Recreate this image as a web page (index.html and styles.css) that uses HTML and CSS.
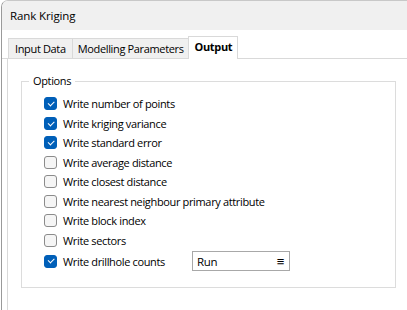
FILE: index.html
```html
<!DOCTYPE html>
<html lang="en">
<head>
  <meta charset="UTF-8">
  <title>Rank Kriging</title>
  <link rel="stylesheet" href="styles.css">
</head>
<body>
  <div class="window">
    <div class="titlebar">Rank Kriging</div>

    <div class="tabs">
      <div class="tab">Input Data</div>
      <div class="tab narrow">Modelling Parameters</div>
      <div class="tab active">Output</div>
    </div>

    <div class="panel">
      <fieldset class="group">
        <legend>Options</legend>

        <label class="row"><span class="box checked"></span>Write number of points</label>
        <label class="row"><span class="box checked"></span>Write kriging variance</label>
        <label class="row"><span class="box checked"></span>Write standard error</label>
        <label class="row"><span class="box"></span>Write average distance</label>
        <label class="row"><span class="box"></span>Write closest distance</label>
        <label class="row"><span class="box"></span>Write nearest neighbour primary attribute</label>
        <label class="row"><span class="box"></span>Write block index</label>
        <label class="row"><span class="box"></span>Write sectors</label>
        <div class="row last">
          <label class="check"><span class="box checked"></span>Write drillhole counts</label>
          <div class="combo">
            <span>Run</span>
            <span class="menu">&#8801;</span>
          </div>
        </div>
      </fieldset>
    </div>
  </div>
</body>
</html>
```

FILE: styles.css
```css
* { box-sizing: border-box; }

body {
  margin: 0;
  background: #fff;
  font-family: 'Open Sans', 'Noto Sans', sans-serif;
  font-size: 11px;
  letter-spacing: -0.35px;
  color: #000;
  width: 407px;
  height: 310px;
  overflow: hidden;
}

.window {
  margin-left: 1px;
  height: 310px;
  border-left: 1px solid #9a9a9a;
  border-top: 1px solid #c8c8c8;
  border-top-left-radius: 7px;
  background: #fff;
  overflow: hidden;
}

.titlebar {
  height: 29px;
  background: #f0f0f0;
  padding: 7px 0 0 8px;
  font-size: 11.5px;
  letter-spacing: -0.1px;
  line-height: 16px;
}

.tabs {
  display: flex;
  align-items: flex-end;
  height: 29px;
  padding-left: 6px;
  border-bottom: 1px solid #d9d9d9;
}

.tab {
  height: 20px;
  padding: 0 6px;
  line-height: 20px;
  background: #f0f0f0;
  border: 1px solid #d9d9d9;
  border-bottom: none;
  margin-right: -1px;
}

.tab.narrow {
  padding: 0 4px 0 5px;
}

.tab.active {
  height: 23px;
  padding: 0 5px 0 6px;
  background: #fff;
  font-weight: 700;
  line-height: 20px;
  margin-bottom: -1px;
}

.panel {
  margin-left: 5px;
  height: 260px;
  border-left: 1px solid #d9d9d9;
  padding: 15px 11px 0 13px;
}

.group {
  margin: 0;
  width: 375px;
  height: 214px;
  border: 1px solid #dcdcdc;
  padding: 6px 0 0 0;
}

.group legend {
  margin-left: 7px;
  padding: 0 4px;
  line-height: 14px;
}

.row {
  display: flex;
  align-items: center;
  height: 19.5px;
  padding-left: 22px;
  white-space: nowrap;
}

.check {
  display: flex;
  align-items: center;
  width: 148px;
}

.box {
  width: 13px;
  height: 13px;
  margin-right: 6px;
  border: 1px solid #8b8b8b;
  border-radius: 3px;
  background: #f5f5f5;
  flex: none;
  display: flex;
  align-items: center;
  justify-content: center;
}

.box.checked {
  border-color: #005fb8;
  background: #005fb8;
}

.box.checked::after {
  content: "";
  width: 5px;
  height: 2.5px;
  border-left: 1px solid #fff;
  border-bottom: 1px solid #fff;
  transform: translateY(-1px) rotate(-45deg);
}

.row.last {
  height: 22px;
}

.combo {
  width: 98px;
  height: 20px;
  border: 1px solid #a8a8a8;
  display: flex;
  align-items: center;
  justify-content: space-between;
  padding: 0 5px 0 4px;
  font-size: 11.5px;
}

.menu {
  font-size: 13px;
  line-height: 1;
}
```
